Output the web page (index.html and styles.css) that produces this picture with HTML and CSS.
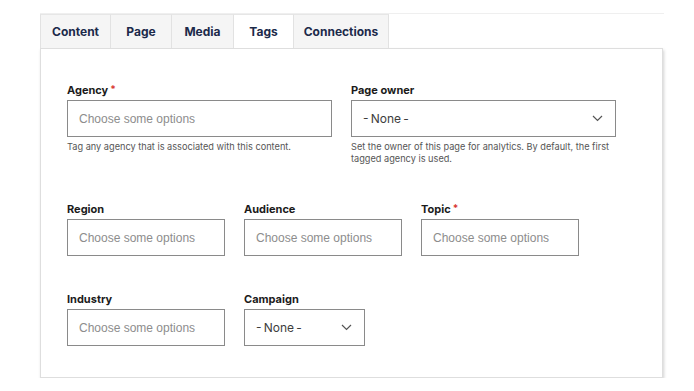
FILE: index.html
```html
<!DOCTYPE html>
<html>
<head>
<meta charset="utf-8">
<link rel="stylesheet" href="styles.css">
</head>
<body>
<div class="wrap">
  <div class="tabs">
    <div class="tab t-content">Content</div>
    <div class="tab t-page">Page</div>
    <div class="tab t-media">Media</div>
    <div class="tab t-tags active">Tags</div>
    <div class="tab t-conn">Connections</div>
  </div>
  <div class="panel">
    <div class="row row1">
      <div class="field wide">
        <div class="label">Agency<span class="req">*</span></div>
        <div class="input"><span class="ph">Choose some options</span></div>
        <div class="help">Tag any agency that is associated with this content.</div>
      </div>
      <div class="field wide">
        <div class="label">Page owner</div>
        <div class="input select"><span class="val">-&thinsp;None&thinsp;-</span>
          <svg class="chev" width="11" height="7" viewBox="0 0 11 7"><polyline points="1,1 5.5,5.5 10,1" fill="none" stroke="#555" stroke-width="1.2"/></svg>
        </div>
        <div class="help">Set the owner of this page for analytics. By default, the first tagged agency is used.</div>
      </div>
    </div>
    <div class="row row2">
      <div class="field narrow">
        <div class="label">Region</div>
        <div class="input"><span class="ph">Choose some options</span></div>
      </div>
      <div class="field narrow">
        <div class="label">Audience</div>
        <div class="input"><span class="ph">Choose some options</span></div>
      </div>
      <div class="field narrow">
        <div class="label">Topic<span class="req">*</span></div>
        <div class="input"><span class="ph">Choose some options</span></div>
      </div>
    </div>
    <div class="row row3">
      <div class="field narrow">
        <div class="label">Industry</div>
        <div class="input"><span class="ph">Choose some options</span></div>
      </div>
      <div class="field small">
        <div class="label">Campaign</div>
        <div class="input select"><span class="val">-&thinsp;None&thinsp;-</span>
          <svg class="chev" width="11" height="7" viewBox="0 0 11 7"><polyline points="1,1 5.5,5.5 10,1" fill="none" stroke="#555" stroke-width="1.2"/></svg>
        </div>
      </div>
    </div>
  </div>
</div>
</body>
</html>
```
FILE: styles.css
```css
html, body {
  margin: 0;
  padding: 0;
  background: #ffffff;
}
body {
  font-family: Inter, "Open Sans", sans-serif;
  color: #1b1b1b;
}
.wrap {
  padding-top: 13px;
  margin-left: 40px;
  width: 624px;
}
.tabs {
  display: flex;
  border-top: 1px solid #efefef;
  height: 34px;
}
.tab {
  box-sizing: border-box;
  height: 34px;
  display: flex;
  align-items: center;
  justify-content: center;
  font-size: 12px;
  font-weight: 700;
  color: #1c2a4a;
  background: #f5f5f5;
  border-left: 1px solid #e2e2e2;
  border-top: 1px solid #e6e6e6;
}
.t-content { width: 70px; }
.t-page { width: 61px; }
.t-media { width: 62px; }
.t-tags { width: 60px; }
.t-conn { width: 96px; border-right: 1px solid #e2e2e2; }
.tab.active {
  background: #ffffff;
}
.panel {
  box-sizing: border-box;
  width: 623px;
  height: 330px;
  background: #fff;
  border: 1px solid #dedede;
  box-shadow: 1px 2px 3px rgba(0,0,0,0.18);
  padding: 34px 0 0 26px;
}
.row {
  display: flex;
  gap: 19px;
}
.row2 { margin-top: 37px; }
.row3 { margin-top: 36px; }
.label {
  font-size: 11px;
  font-weight: 700;
  line-height: 14px;
  margin-bottom: 3px;
  color: #1b1b1b;
}
.req {
  color: #d83933;
  margin-left: 2px;
  font-size: 10px;
  vertical-align: top;
  position: relative;
  top: -1px;
}
.input {
  box-sizing: border-box;
  height: 37px;
  border: 1px solid #8a8a8a;
  display: flex;
  align-items: center;
  padding: 0 12px 0 11px;
  background: #fff;
}
.wide { width: 265px; }
.wide .input { width: 265px; }
.narrow .input { width: 158px; }
.small .input { width: 121px; }
.ph {
  font-family: "Liberation Sans", Arial, sans-serif;
  font-size: 12px;
  color: #8d8d8d;
}
.select {
  justify-content: space-between;
}
.val {
  font-size: 12px;
  color: #3d3d3d;
}
.chev {
  display: block;
}
.help {
  margin-top: 4px;
  font-size: 9.2px;
  line-height: 12px;
  color: #565656;
}
```
